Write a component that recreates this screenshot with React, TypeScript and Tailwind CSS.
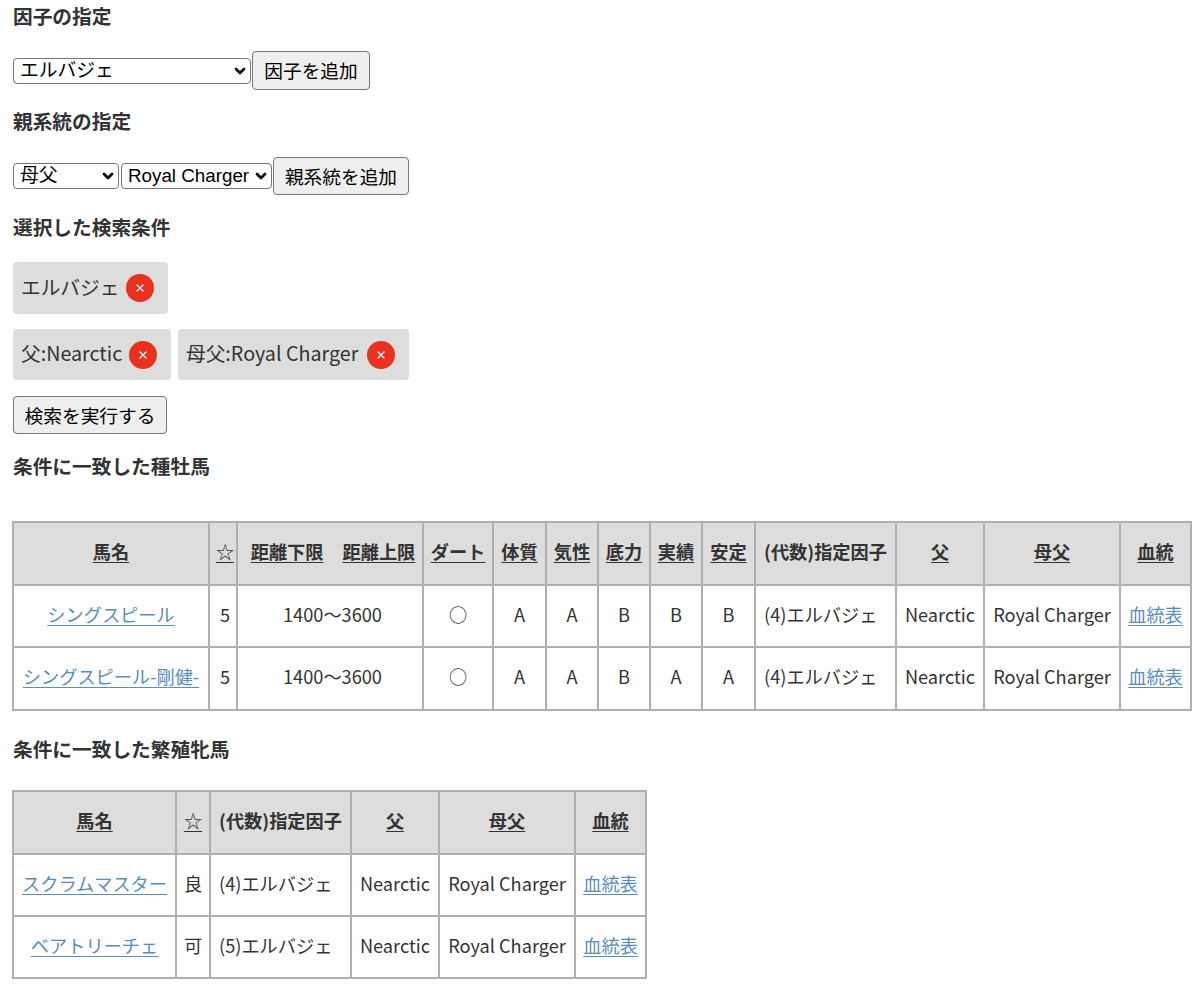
import { ChevronDown, X } from 'lucide-react';

const jp = '[font-family:"Noto_Sans_CJK_JP","Noto_Sans",sans-serif]';

function Heading({ children, className = '' }: { children: React.ReactNode; className?: string }) {
  return <h2 className={`h-[34px] text-[19.7px] leading-[32px] font-bold text-[#333] ${className}`}>{children}</h2>;
}

function Picker({ value, width }: { value: string; width: string }) {
  return (
    <div className={`relative h-[26px] ${width}`}>
      <select
        defaultValue={value}
        className="h-full w-full appearance-none rounded-[4px] border border-[#767676] bg-white pl-[6px] text-[18.8px] leading-[24px] text-black [font-family:'Liberation_Sans','Noto_Sans_CJK_JP',sans-serif]"
      >
        <option>{value}</option>
      </select>
      <ChevronDown size={16} strokeWidth={4} className="pointer-events-none absolute top-[5px] right-[3px] text-black" />
    </div>
  );
}

function Btn({ children, className = '' }: { children: React.ReactNode; className?: string }) {
  return (
    <button className={`rounded-[4px] border border-[#767676] bg-[#efefef] text-[18.7px] leading-none text-black ${className}`}>
      {children}
    </button>
  );
}

function Chip({ label, width }: { label: string; width: string }) {
  return (
    <div className={`flex items-center justify-between rounded-[4px] bg-[#dddddd] pr-[14px] pl-[8px] ${width}`}>
      <span className="-mt-[3px] text-[19.7px] whitespace-nowrap text-[#333]">{label}</span>
      <span className="flex h-[28px] w-[28px] items-center justify-center rounded-full bg-[#e8321f]">
        <X size={12} strokeWidth={2.6} className="text-white" />
      </span>
    </div>
  );
}

const Link = ({ children }: { children: React.ReactNode }) => (
  <a href="#" className="text-[#5b8cc0] underline underline-offset-[3px]">{children}</a>
);

const thBase = 'border-2 border-[#b0b0b0] bg-[#dddddd] p-0 pb-[3px] text-center text-[18.2px] font-bold whitespace-nowrap text-[#333]';
const th = `${thBase} underline underline-offset-[3px]`;
const td = 'border-2 border-[#b0b0b0] p-0 pb-[3px] text-center text-[18.2px] whitespace-nowrap text-[#333]';

const studs = [
  { name: 'シングスピール', star: '5', dart: '○', a: 'A', b: 'A', c: 'B', d: 'B', e: 'B', factor: '(4)エルバジェ' },
  { name: 'シングスピール-剛健-', star: '5', dart: '○', a: 'A', b: 'A', c: 'B', d: 'A', e: 'A', factor: '(4)エルバジェ' },
];

const mares = [
  { name: 'スクラムマスター', star: '良', factor: '(4)エルバジェ' },
  { name: 'ベアトリーチェ', star: '可', factor: '(5)エルバジェ' },
];

export default function App() {
  return (
    <div className={`min-h-[992px] bg-white px-[13px] ${jp}`}>
      <Heading>因子の指定</Heading>
      <div className="mt-[17px] flex h-[39px] items-center">
        <Picker value="エルバジェ" width="w-[238px]" />
        <Btn className="ml-[1px] h-[39px] w-[118px]">因子を追加</Btn>
      </div>

      <Heading className="mt-[15px]">親系統の指定</Heading>
      <div className="mt-[18px] flex h-[38px] items-center">
        <Picker value="母父" width="w-[106px]" />
        <div className="ml-[2px]"><Picker value="Royal Charger" width="w-[151px]" /></div>
        <Btn className="ml-[1px] h-[38px] w-[136px]">親系統を追加</Btn>
      </div>

      <Heading className="mt-[16px]">選択した検索条件</Heading>
      <div className="mt-[17px] flex h-[52px]">
        <Chip label="エルバジェ" width="w-[155px]" />
      </div>
      <div className="mt-[15px] flex h-[51px] gap-[7px]">
        <Chip label="父:Nearctic" width="w-[158px]" />
        <Chip label="母父:Royal Charger" width="w-[231px]" />
      </div>
      <Btn className="mt-[16px] block h-[38px] w-[154px]">検索を実行する</Btn>

      <Heading className="mt-[16px]">条件に一致した種牡馬</Heading>
      <table className="mt-[37px] -ml-px w-[1178px] table-fixed border-collapse">
        <colgroup>
          <col className="w-[196px]" /><col className="w-[28px]" /><col className="w-[186px]" /><col className="w-[70px]" />
          <col className="w-[53px]" /><col className="w-[52px]" /><col className="w-[52px]" /><col className="w-[52px]" />
          <col className="w-[53px]" /><col className="w-[141px]" /><col className="w-[88px]" /><col className="w-[136px]" />
          <col className="w-[71px]" />
        </colgroup>
        <thead>
          <tr className="h-[63px]">
            <th className={th}>馬名</th>
            <th className={`${thBase} pl-[4px] font-normal underline underline-offset-[3px]`}>☆</th>
            <th className={`${th} pl-[6px]`}>距離下限<span className="inline-block w-[19px]" />距離上限</th>
            <th className={th}>ダート</th>
            <th className={th}>体質</th>
            <th className={th}>気性</th>
            <th className={th}>底力</th>
            <th className={th}>実績</th>
            <th className={th}>安定</th>
            <th className={thBase}>(代数)指定因子</th>
            <th className={th}>父</th>
            <th className={th}>母父</th>
            <th className={th}>血統</th>
          </tr>
        </thead>
        <tbody>
          {studs.map((row, index) => (
            <tr key={row.name} className={index === 0 ? 'h-[62px]' : 'h-[63px]'}>
              <td className={td}><Link>{row.name}</Link></td>
              <td className={`${td} pl-[4px]`}>{row.star}</td>
              <td className={`${td} pl-[5px]`}>1400〜3600</td>
              <td className={td}>{row.dart}</td>
              <td className={td}>{row.a}</td>
              <td className={td}>{row.b}</td>
              <td className={td}>{row.c}</td>
              <td className={td}>{row.d}</td>
              <td className={td}>{row.e}</td>
              <td className={`${td} pl-[8px] text-left`}>{row.factor}</td>
              <td className={td}>Nearctic</td>
              <td className={td}>Royal Charger</td>
              <td className={td}><Link>血統表</Link></td>
            </tr>
          ))}
        </tbody>
      </table>

      <Heading className="mt-[22px]">条件に一致した繁殖牝馬</Heading>
      <table className="mt-[23px] -ml-px w-[633px] table-fixed border-collapse">
        <colgroup>
          <col className="w-[163px]" /><col className="w-[34px]" /><col className="w-[141px]" /><col className="w-[88px]" />
          <col className="w-[136px]" /><col className="w-[71px]" />
        </colgroup>
        <thead>
          <tr className="h-[63px]">
            <th className={th}>馬名</th>
            <th className={`${thBase} font-normal underline underline-offset-[3px]`}>☆</th>
            <th className={thBase}>(代数)指定因子</th>
            <th className={th}>父</th>
            <th className={th}>母父</th>
            <th className={th}>血統</th>
          </tr>
        </thead>
        <tbody>
          {mares.map((row) => (
            <tr key={row.name} className="h-[62px]">
              <td className={td}><Link>{row.name}</Link></td>
              <td className={td}>{row.star}</td>
              <td className={`${td} pl-[8px] text-left`}>{row.factor}</td>
              <td className={td}>Nearctic</td>
              <td className={td}>Royal Charger</td>
              <td className={td}><Link>血統表</Link></td>
            </tr>
          ))}
        </tbody>
      </table>
    </div>
  );
}
